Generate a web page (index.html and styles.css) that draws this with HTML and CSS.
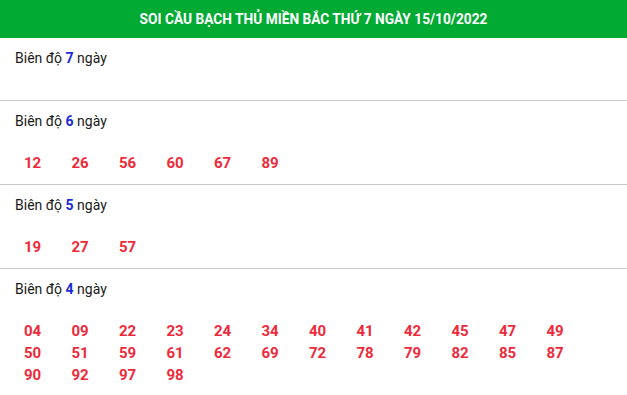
FILE: index.html
```html
<!DOCTYPE html>
<html lang="vi">
<head>
<meta charset="utf-8">
<title>Soi cầu bạch thủ</title>
<link rel="stylesheet" href="styles.css">
</head>
<body>
<div class="box">
  <div class="head"><span class="head-text">SOI CẦU BẠCH THỦ MIỀN BẮC THỨ 7 NGÀY 15/10/2022</span></div>
  <div class="sec">
    <div class="title">Biên độ <b>7</b> ngày</div>
  </div>
  <div class="sec">
    <div class="title">Biên độ <b>6</b> ngày</div>
    <div class="nums"><span>12</span><span>26</span><span>56</span><span>60</span><span>67</span><span>89</span></div>
  </div>
  <div class="sec">
    <div class="title">Biên độ <b>5</b> ngày</div>
    <div class="nums"><span>19</span><span>27</span><span>57</span></div>
  </div>
  <div class="sec last">
    <div class="title">Biên độ <b>4</b> ngày</div>
    <div class="nums"><span>04</span><span>09</span><span>22</span><span>23</span><span>24</span><span>34</span><span>40</span><span>41</span><span>42</span><span>45</span><span>47</span><span>49</span><span>50</span><span>51</span><span>59</span><span>61</span><span>62</span><span>69</span><span>72</span><span>78</span><span>79</span><span>82</span><span>85</span><span>87</span><span>90</span><span>92</span><span>97</span><span>98</span></div>
  </div>
</div>
</body>
</html>
```
FILE: styles.css
```css
html, body { margin: 0; padding: 0; background: #fff; }
body { font-family: Roboto, "Noto Sans", sans-serif; color: #1a1a1a; }
.box { width: 627px; }
.head {
  background: #00aa33;
  height: 38px;
  display: flex;
  align-items: center;
  justify-content: center;
}
.head-text {
  color: #fff;
  font-weight: 700;
  font-size: 15.5px;
  display: inline-block;
  transform: scaleX(0.885);
  white-space: nowrap;
}
.sec {
  border-bottom: 1px solid #c8c8c8;
  padding: 10px 0 10px 15px;
}
.sec.last { border-bottom: none; }
.title { font-size: 14px; line-height: 21px; margin-bottom: 21px; }
.title b { color: #1a2ad8; font-weight: 700; }
.nums {
  padding-left: 9px;
  display: grid;
  grid-template-columns: repeat(12, 47.5px);
  row-gap: 1px;
}
.nums span {
  color: #ee2a3a;
  font-weight: 700;
  font-size: 15px;
  line-height: 21px;
}
```
